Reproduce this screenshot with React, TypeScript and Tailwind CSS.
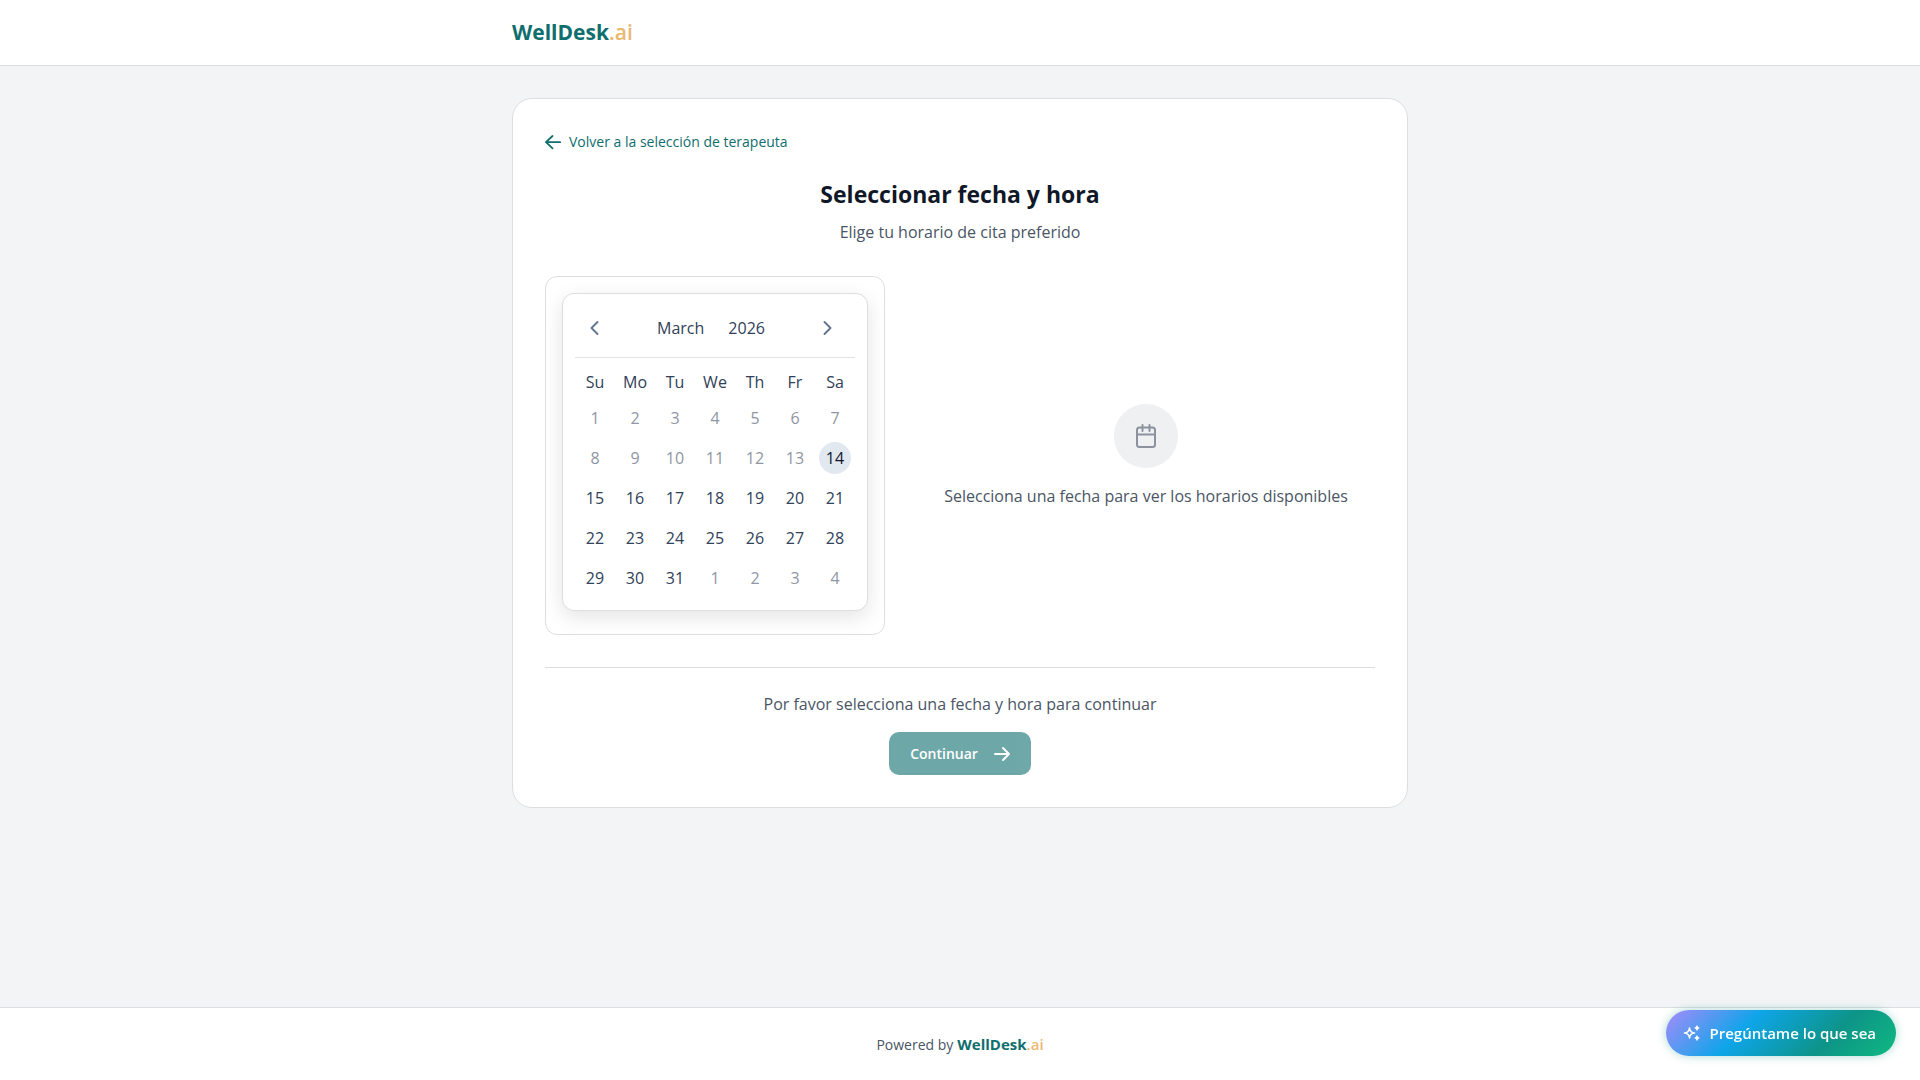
import { useState } from 'react'

const weekDays = ['Su', 'Mo', 'Tu', 'We', 'Th', 'Fr', 'Sa']

const TODAY = 14
const DAYS_IN_MONTH = 31

// March 2026 starts on a Sunday, the last row is filled with April
const days = Array.from({ length: 35 }, (_, i) => ({
  key: i,
  label: i < DAYS_IN_MONTH ? i + 1 : i + 1 - DAYS_IN_MONTH,
  disabled: i + 1 < TODAY || i >= DAYS_IN_MONTH,
  today: i + 1 === TODAY,
}))

const weeks = Array.from({ length: 5 }, (_, i) => days.slice(i * 7, i * 7 + 7))

interface IconProps {
  className?: string
}

function ArrowLeftIcon({ className }: IconProps) {
  return (
    <svg viewBox="0 0 16 16" fill="none" stroke="currentColor" strokeWidth="1.8" strokeLinecap="round" strokeLinejoin="round" className={className} aria-hidden="true">
      <path d="M7.5 2 1 8.2l6.5 6.2M1 8.2h14.2" />
    </svg>
  )
}

function ArrowRightIcon({ className }: IconProps) {
  return (
    <svg viewBox="0 0 16 16" fill="none" stroke="currentColor" strokeWidth="1.9" strokeLinecap="round" strokeLinejoin="round" className={className} aria-hidden="true">
      <path d="M9 2l6 6-6 6M15 8H1" />
    </svg>
  )
}

function ChevronIcon({ className }: IconProps) {
  return (
    <svg viewBox="0 0 20 20" fill="none" stroke="currentColor" strokeWidth="1.9" strokeLinecap="round" strokeLinejoin="round" className={className} aria-hidden="true">
      <path d="M12.5 4l-6 6 6 6" />
    </svg>
  )
}

function CalendarIcon({ className }: IconProps) {
  return (
    <svg viewBox="0 0 24 24" fill="none" stroke="currentColor" strokeWidth="2" strokeLinecap="round" strokeLinejoin="round" className={className} aria-hidden="true">
      <rect x="3" y="3.5" width="18" height="19.5" rx="2.5" />
      <path d="M3 10.5h18M8.5 1v6M15.5 1v6" />
    </svg>
  )
}

function SparklesIcon({ className }: IconProps) {
  return (
    <svg viewBox="0 0 24 24" fill="none" stroke="currentColor" strokeWidth="2" strokeLinecap="round" strokeLinejoin="round" className={className} aria-hidden="true">
      <path d="M16 18a2 2 0 0 1 2 2a2 2 0 0 1 2 -2a2 2 0 0 1 -2 -2a2 2 0 0 1 -2 2zm0 -12a2 2 0 0 1 2 2a2 2 0 0 1 2 -2a2 2 0 0 1 -2 -2a2 2 0 0 1 -2 2zm-7 12a6 6 0 0 1 6 -6a6 6 0 0 1 -6 -6a6 6 0 0 1 -6 6a6 6 0 0 1 6 6z" />
    </svg>
  )
}

function Brand({ className }: IconProps) {
  return (
    <span className={`font-bold text-[#0f6e6e] ${className ?? ''}`}>
      WellDesk<span className="font-semibold text-[#e9b872]">.ai</span>
    </span>
  )
}

function Calendar() {
  const [selected, setSelected] = useState<number | null>(null)

  return (
    <div className="rounded-xl border border-[#dcdee1] bg-white p-3 shadow-[0_6px_20px_rgba(0,0,0,0.11)]">
      <div className="flex h-13 items-center justify-between border-b border-[#e1e4e9] pr-2 pb-2">
        <button type="button" aria-label="Previous month" className="flex h-8 w-10 items-center justify-center text-slate-500">
          <ChevronIcon className="h-5 w-5" />
        </button>
        <div className="flex gap-6 text-base font-medium text-slate-700">
          <button type="button">March</button>
          <button type="button">2026</button>
        </div>
        <button type="button" aria-label="Next month" className="flex h-8 w-10 items-center justify-center text-slate-500">
          <ChevronIcon className="h-5 w-5 rotate-180" />
        </button>
      </div>

      <table className="text-center text-base text-slate-700">
        <thead>
          <tr>
            {weekDays.map((d) => (
              <th key={d} scope="col" className="h-10 w-10 pt-2 font-medium">{d}</th>
            ))}
          </tr>
        </thead>
        <tbody>
          {weeks.map((week, i) => (
            <tr key={i}>
              {week.map((day) => (
                <td key={day.key} className="h-10 w-10 p-0">
                  <button
                    type="button"
                    disabled={day.disabled}
                    onClick={() => setSelected(day.key)}
                    className={`mx-auto flex h-8 w-8 items-center justify-center rounded-full ${
                      day.disabled ? 'text-[#9096a3]' : ''
                    } ${day.today ? 'bg-slate-200 font-medium text-slate-900' : ''} ${
                      selected === day.key ? 'ring-2 ring-[#0f6e6e]' : ''
                    }`}
                  >
                    {day.label}
                  </button>
                </td>
              ))}
            </tr>
          ))}
        </tbody>
      </table>
    </div>
  )
}

export default function App() {
  return (
    <div className="flex min-h-screen flex-col bg-gray-100 font-['Open_Sans',sans-serif]">
      {/* Header */}
      <header className="border-b border-[#dcdee1] bg-white">
        <div className="mx-auto flex w-full max-w-4xl items-center py-4">
          <Brand className="text-[21px] leading-[33px]" />
        </div>
      </header>

      <main className="mx-auto w-full max-w-4xl flex-1 py-8">
        <div className="rounded-[20px] border border-[#dcdee1] bg-white p-8">
          <a href="#" className="flex w-fit items-center gap-2 text-sm leading-[21px] text-[#0f6e6e]">
            <ArrowLeftIcon className="h-4 w-4" />
            Volver a la selección de terapeuta
          </a>

          <div className="mt-6 text-center">
            <h1 className="text-[23px] leading-9 font-bold text-gray-900">Seleccionar fecha y hora</h1>
            <p className="mt-2 text-base text-gray-600">Elige tu horario de cita preferido</p>
          </div>

          <div className="mt-8 flex gap-8">
            <div className="rounded-xl border border-[#dcdee1] px-4 pt-4 pb-[23px]">
              <Calendar />
            </div>
            <div className="flex flex-1 flex-col items-center justify-center">
              <div className="flex h-16 w-16 items-center justify-center rounded-full bg-[#eff0f2] text-[#8b919d]">
                <CalendarIcon className="h-6 w-6" />
              </div>
              <p className="mt-4 text-base text-gray-600">Selecciona una fecha para ver los horarios disponibles</p>
            </div>
          </div>

          {/* Footer actions */}
          <div className="mt-8 flex flex-col items-center gap-4 border-t border-[#dcdee1] pt-6">
            <p className="text-base text-gray-600">Por favor selecciona una fecha y hora para continuar</p>
            <button
              type="button"
              disabled
              className="flex h-[43px] items-center gap-4 rounded-[10px] bg-[#0f6e6e] px-[21px] text-sm font-semibold text-white opacity-60"
            >
              Continuar
              <ArrowRightIcon className="h-4 w-4" />
            </button>
          </div>
        </div>
      </main>

      <footer className="flex items-baseline justify-center gap-1 border-t border-[#dcdee1] bg-white py-6 text-sm text-gray-600">
        Powered by
        <Brand className="text-[15px] leading-6" />
      </footer>

      {/* Assistant launcher */}
      <button
        type="button"
        className="fixed right-6 bottom-6 flex h-[46px] items-center gap-2 rounded-full bg-[linear-gradient(135deg,#a78bfa_0%,#0ea5e9_35%,#0d9488_70%,#10b981_100%)] pr-5 pl-4 text-[15px] font-semibold text-white shadow-[0_0_10px_rgba(13,148,136,0.35)]"
      >
        <SparklesIcon className="h-5 w-5" />
        Pregúntame lo que sea
      </button>
    </div>
  )
}
